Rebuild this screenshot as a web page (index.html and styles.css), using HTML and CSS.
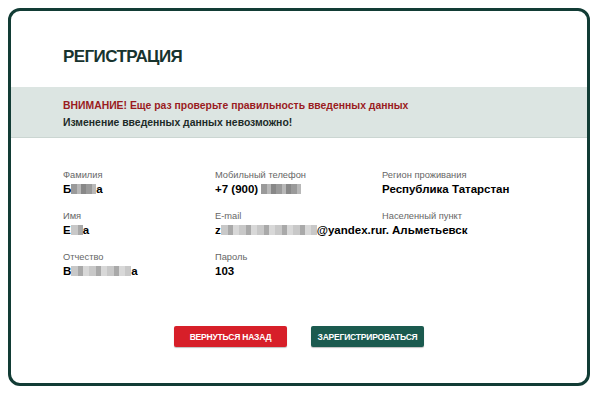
FILE: index.html
```html
<!DOCTYPE html>
<html lang="ru">
<head>
    <meta charset="UTF-8">
    <meta name="viewport" content="width=device-width, initial-scale=1.0">
    <title>Регистрация</title>
    <link rel="stylesheet" href="styles.css">
</head>
<body>

<div class="card">
    <h1 class="card-title">РЕГИСТРАЦИЯ</h1>

    <div class="notice">
        <div class="notice-warn">ВНИМАНИЕ! Еще раз проверьте правильность введенных данных</div>
        <div class="notice-info">Изменение введенных данных невозможно!</div>
    </div>

    <div class="fields">
        <div class="field">
            <div class="field-label">Фамилия</div>
            <div class="field-value">Б<span class="blur w25"></span>а</div>
        </div>
        <div class="field">
            <div class="field-label">Мобильный телефон</div>
            <div class="field-value">+7 (900) <span class="blur w40"></span></div>
        </div>
        <div class="field">
            <div class="field-label">Регион проживания</div>
            <div class="field-value">Республика Татарстан</div>
        </div>

        <div class="field">
            <div class="field-label">Имя</div>
            <div class="field-value">Е<span class="blur w12 light"></span>а</div>
        </div>
        <div class="field">
            <div class="field-label">E-mail</div>
            <div class="field-value nowrap">z<span class="blur w96 light"></span>@yandex.ru</div>
        </div>
        <div class="field">
            <div class="field-label">Населенный пункт</div>
            <div class="field-value">г. Альметьевск</div>
        </div>

        <div class="field">
            <div class="field-label">Отчество</div>
            <div class="field-value">В<span class="blur w60 light"></span>а</div>
        </div>
        <div class="field">
            <div class="field-label">Пароль</div>
            <div class="field-value">103</div>
        </div>
        <div class="field"></div>
    </div>

    <div class="actions">
        <button class="btn btn-back">ВЕРНУТЬСЯ НАЗАД</button>
        <button class="btn btn-submit">ЗАРЕГИСТРИРОВАТЬСЯ</button>
    </div>
</div>

</body>
</html>
```

FILE: styles.css
```css
body {
    font-family: "Liberation Sans", Arial, sans-serif;
    background-color: #fff;
    color: #111;
    margin: 0;
    padding: 8px 10px 7px 8px;
}
.card {
    border: 3px solid #123c35;
    border-radius: 12px;
    height: 378px;
    box-sizing: border-box;
    overflow: hidden;
}
.card-title {
    margin: 0;
    padding: 36px 0 0 52px;
    height: 76px;
    box-sizing: border-box;
    font-size: 17px;
    line-height: 20px;
    letter-spacing: -0.6px;
    color: #17332e;
}
.notice {
    background-color: #dce5e2;
    border-bottom: 1px solid #cbd6d2;
    padding: 10px 0 0 52px;
    height: 51px;
    box-sizing: border-box;
    font-size: 10.4px;
    font-weight: bold;
    line-height: 17px;
}
.notice-warn {
    color: #9a1b1e;
}
.notice-info {
    color: #1d2b28;
}
.fields {
    display: grid;
    grid-template-columns: 152px 167px 1fr;
    row-gap: 13px;
    padding: 30px 0 0 52px;
}
.field-label {
    font-size: 9.3px;
    line-height: 14px;
    color: #666;
}
.field-value {
    font-size: 11.5px;
    line-height: 14px;
    font-weight: bold;
    color: #000;
}
.nowrap {
    white-space: nowrap;
}
.blur {
    display: inline-block;
    height: 10px;
    vertical-align: -1px;
    background: repeating-linear-gradient(90deg, #9a9a9a 0 6px, #b8b8b8 6px 10px, #888 10px 15px);
}
.blur.light {
    background: repeating-linear-gradient(90deg, #c8c8c8 0 7px, #a9a9a9 7px 12px, #d8d8d8 12px 18px);
}
.w12 { width: 12px; }
.w25 { width: 25px; }
.w40 { width: 40px; }
.w60 { width: 60px; }
.w96 { width: 96px; }
.actions {
    display: flex;
    justify-content: center;
    gap: 24px;
    padding: 48px 0 0 0;
}
.btn {
    width: 113px;
    height: 21px;
    border: none;
    border-radius: 2px;
    color: #fff;
    font-family: "Liberation Sans", Arial, sans-serif;
    font-size: 8.5px;
    font-weight: bold;
    letter-spacing: -0.2px;
    padding: 0;
    box-shadow: 0 1px 1px rgba(0, 0, 0, 0.25);
}
.btn-back {
    background-color: #d71f29;
}
.btn-submit {
    background-color: #1b5a4f;
}
```
